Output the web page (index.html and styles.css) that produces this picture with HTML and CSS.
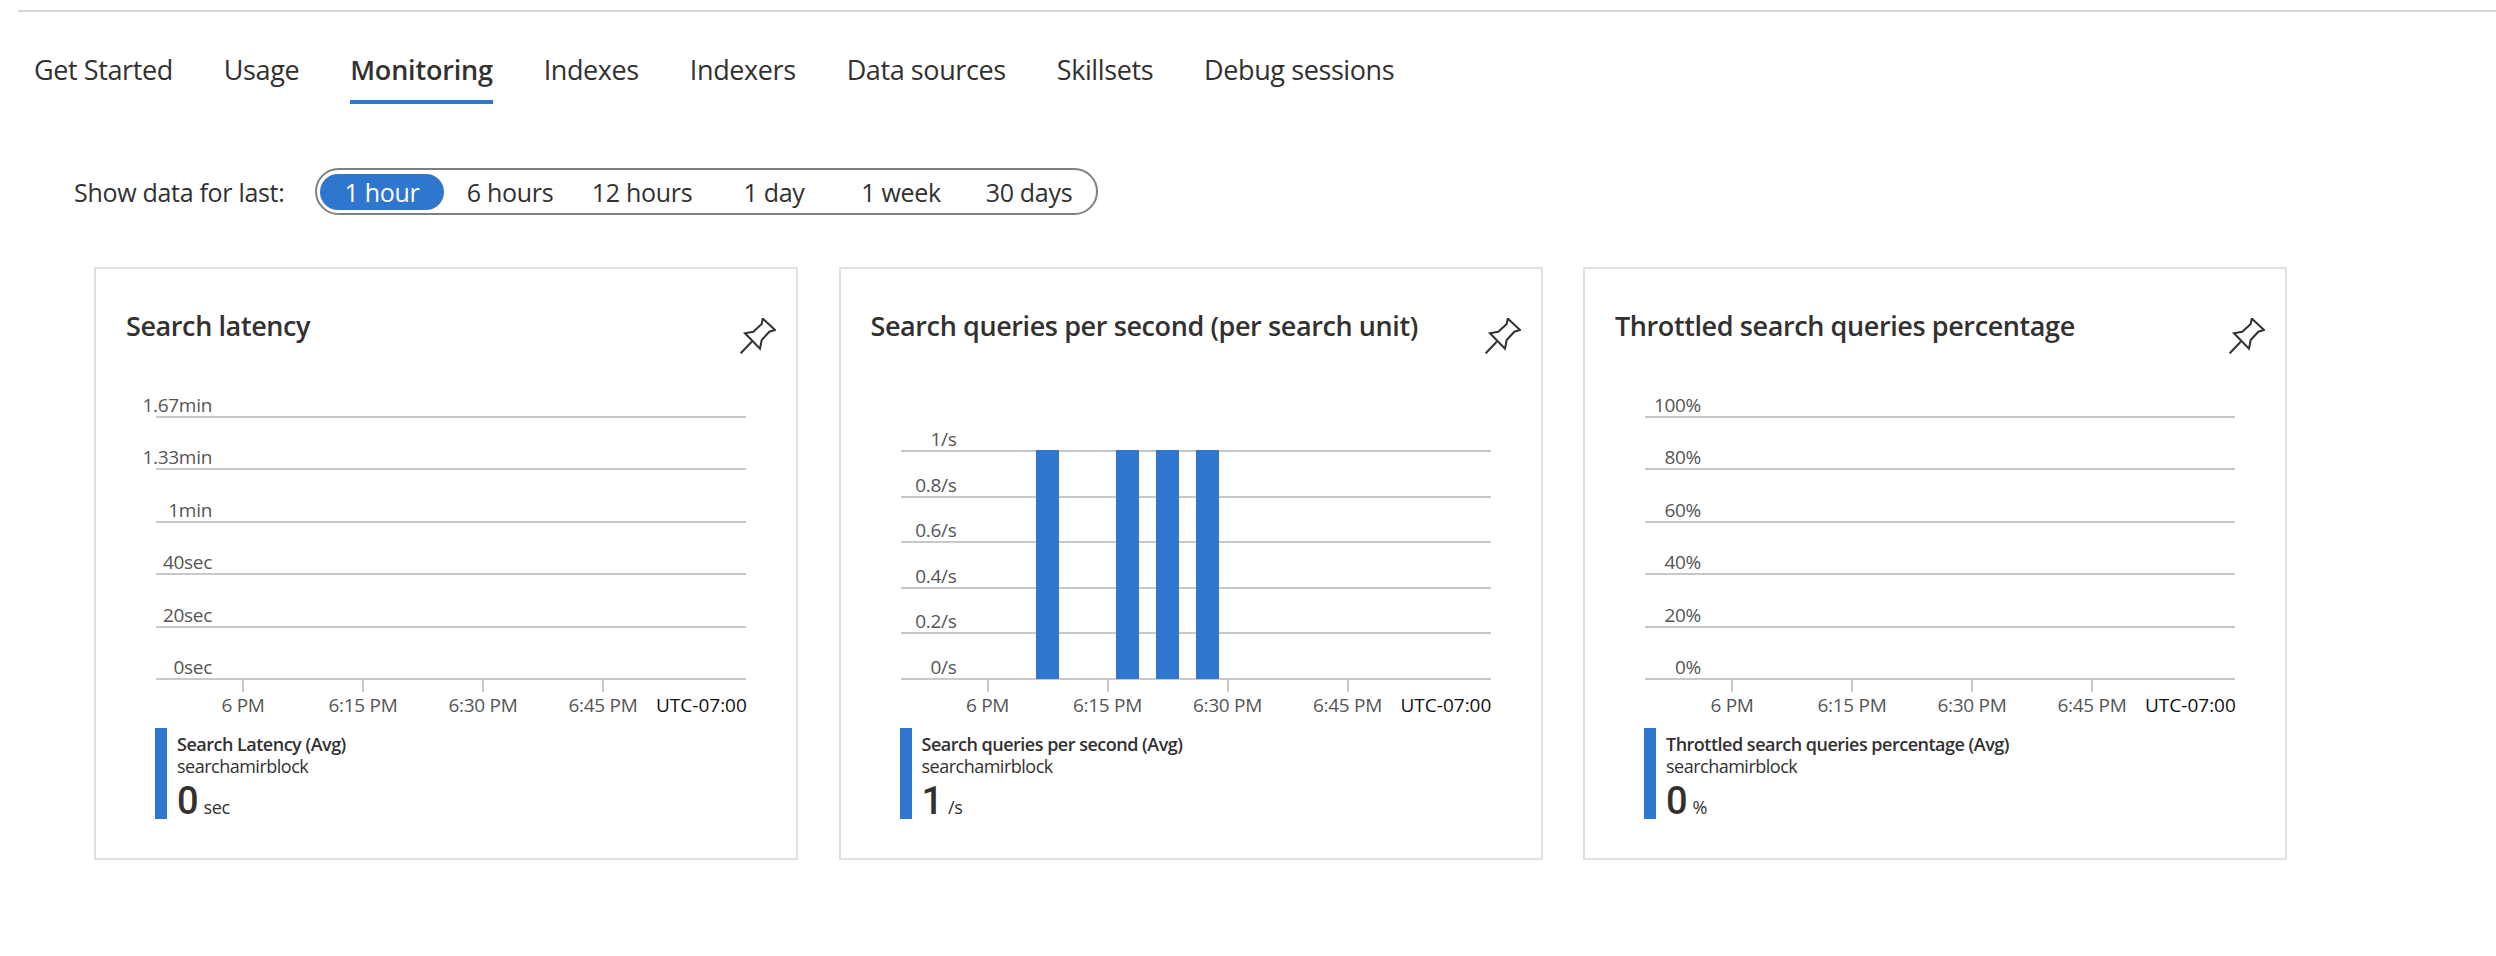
FILE: index.html
```html
<!DOCTYPE html>
<html lang="en">
<head>
  <meta charset="UTF-8">
  <title>Monitoring</title>
  <link rel="stylesheet" href="styles.css">
</head>
<body>
  <div class="topline"></div>

  <!-- Tabs -->
  <nav class="tabs">
    <a class="tab">Get Started</a>
    <a class="tab">Usage</a>
    <a class="tab active">Monitoring</a>
    <a class="tab">Indexes</a>
    <a class="tab">Indexers</a>
    <a class="tab">Data sources</a>
    <a class="tab">Skillsets</a>
    <a class="tab">Debug sessions</a>
  </nav>

  <!-- Time range -->
  <div class="range">
    <span class="range-label">Show data for last:</span>
    <div class="pill">
      <span class="option selected">1 hour</span>
      <span class="option">6 hours</span>
      <span class="option">12 hours</span>
      <span class="option">1 day</span>
      <span class="option">1 week</span>
      <span class="option">30 days</span>
    </div>
  </div>

  <div class="cards">

    <!-- Search latency -->
    <section class="card">
      <header class="card-head">
        <h2>Search latency</h2>
        <svg class="pin" viewBox="0 0 36 36"><path d="M5 15.3 13.3 13.7 21.7 6 22.7.5 35 12 29.3 13.7 21.7 22 20 30.7ZM.7 35.3 11.7 23.7"/></svg>
      </header>
      <div class="chart">
        <div class="plot wide">
          <div class="row"><span>1.67min</span></div>
          <div class="row"><span>1.33min</span></div>
          <div class="row"><span>1min</span></div>
          <div class="row"><span>40sec</span></div>
          <div class="row"><span>20sec</span></div>
          <div class="row"><span>0sec</span></div>
        </div>
        <div class="axis">
          <span class="tick">6 PM</span>
          <span class="tick">6:15 PM</span>
          <span class="tick">6:30 PM</span>
          <span class="tick">6:45 PM</span>
          <span class="zone">UTC-07:00</span>
        </div>
      </div>
      <div class="legend">
        <div class="legend-name">Search Latency (Avg)</div>
        <div class="legend-res">searchamirblock</div>
        <div class="legend-val"><b>0</b><span>sec</span></div>
      </div>
    </section>

    <!-- Search queries per second -->
    <section class="card">
      <header class="card-head">
        <h2>Search queries per second (per search unit)</h2>
        <svg class="pin" viewBox="0 0 36 36"><path d="M5 15.3 13.3 13.7 21.7 6 22.7.5 35 12 29.3 13.7 21.7 22 20 30.7ZM.7 35.3 11.7 23.7"/></svg>
      </header>
      <div class="chart">
        <div class="plot narrow">
          <div class="row"><span>1/s</span></div>
          <div class="row"><span>0.8/s</span></div>
          <div class="row"><span>0.6/s</span></div>
          <div class="row"><span>0.4/s</span></div>
          <div class="row"><span>0.2/s</span></div>
          <div class="row"><span>0/s</span></div>
          <div class="bar" style="left: 135px"></div>
          <div class="bar" style="left: 215px"></div>
          <div class="bar" style="left: 255px"></div>
          <div class="bar" style="left: 295px"></div>
        </div>
        <div class="axis">
          <span class="tick">6 PM</span>
          <span class="tick">6:15 PM</span>
          <span class="tick">6:30 PM</span>
          <span class="tick">6:45 PM</span>
          <span class="zone">UTC-07:00</span>
        </div>
      </div>
      <div class="legend">
        <div class="legend-name">Search queries per second (Avg)</div>
        <div class="legend-res">searchamirblock</div>
        <div class="legend-val"><b>1</b><span>/s</span></div>
      </div>
    </section>

    <!-- Throttled -->
    <section class="card">
      <header class="card-head">
        <h2>Throttled search queries percentage</h2>
        <svg class="pin" viewBox="0 0 36 36"><path d="M5 15.3 13.3 13.7 21.7 6 22.7.5 35 12 29.3 13.7 21.7 22 20 30.7ZM.7 35.3 11.7 23.7"/></svg>
      </header>
      <div class="chart">
        <div class="plot wide">
          <div class="row"><span>100%</span></div>
          <div class="row"><span>80%</span></div>
          <div class="row"><span>60%</span></div>
          <div class="row"><span>40%</span></div>
          <div class="row"><span>20%</span></div>
          <div class="row"><span>0%</span></div>
        </div>
        <div class="axis">
          <span class="tick">6 PM</span>
          <span class="tick">6:15 PM</span>
          <span class="tick">6:30 PM</span>
          <span class="tick">6:45 PM</span>
          <span class="zone">UTC-07:00</span>
        </div>
      </div>
      <div class="legend">
        <div class="legend-name">Throttled search queries percentage (Avg)</div>
        <div class="legend-res">searchamirblock</div>
        <div class="legend-val"><b>0</b><span>%</span></div>
      </div>
    </section>

  </div>
</body>
</html>
```

FILE: styles.css
```css
body {
  margin: 0;
  background: white;
  color: #323130;
  font-family: "Open Sans", sans-serif;
}

.topline {
  height: 2px;
  margin: 10px 0 0 18px;
  background: #d8d8d8;
}

.tabs {
  display: flex;
  gap: 51px;
  margin: 38px 0 0 34px;
}

.tab {
  padding-bottom: 10px;
  border-bottom: 4px solid transparent;
  font-size: 27px;
  line-height: 40px;
  letter-spacing: -0.4px;
}

.tab.active {
  border-bottom-color: #2f77ce;
  font-weight: 600;
  letter-spacing: -0.2px;
}

.range {
  display: flex;
  align-items: center;
  margin: 64px 0 0 74px;
}

.range-label {
  width: 241px;
  font-size: 25px;
  letter-spacing: -0.3px;
}

.pill {
  display: grid;
  grid-template-columns: 124px 132px 132px 132px 122px 134px;
  align-items: center;
  height: 47px;
  box-sizing: border-box;
  padding-left: 3px;
  border: 2px solid #808080;
  border-radius: 24px;
  font-size: 25px;
  letter-spacing: -0.3px;
}

.option {
  text-align: center;
  line-height: 36px;
}

.option.selected {
  background: #2f77ce;
  color: white;
  border-radius: 18px;
}

.cards {
  display: grid;
  grid-template-columns: repeat(3, 704px);
  gap: 40.5px;
  margin: 52px 0 0 94px;
}

.card {
  display: flex;
  flex-direction: column;
  box-sizing: border-box;
  height: 593px;
  padding: 0 50px 0 60px;
  border: 2px solid #e0e0e0;
}

.card-head {
  display: flex;
  justify-content: space-between;
  height: 94px;
  margin: 0 -30px 0 -30px;
  padding-top: 37px;
  box-sizing: border-box;
}

.card-head h2 {
  margin: 0;
  font-size: 27px;
  font-weight: 600;
  line-height: 40px;
  letter-spacing: -0.4px;
}

.pin {
  width: 36px;
  height: 36px;
  margin-top: 12px;
  fill: none;
  stroke: #333;
  stroke-width: 2;
}

.chart {
  display: flex;
  flex-direction: column;
  justify-content: flex-end;
  height: 355px;
}

.plot {
  position: relative;
}

.row {
  display: flex;
  align-items: flex-end;
  justify-content: flex-end;
  box-sizing: border-box;
  width: 100%;
  border-bottom: 2px solid #c8c8c8;
  font-size: 19px;
  line-height: 26px;
  color: #555;
  letter-spacing: -0.3px;
}

/* label hangs off the start of the line */
.row span {
  margin-right: 534px;
  margin-bottom: -2px;
  white-space: nowrap;
}

.wide .row { height: 52.4px; }
.narrow .row { height: 45.6px; }

.bar {
  position: absolute;
  bottom: 1px;
  top: 44px;
  width: 23px;
  background: #2f77ce;
}

.axis {
  display: flex;
  padding-left: 27px;
}

.tick {
  flex: none;
  width: 120px;
  padding-top: 12px;
  text-align: center;
  font-size: 19px;
  line-height: 26px;
  color: #555;
  letter-spacing: -0.3px;
  position: relative;
}

.tick::before {
  content: "";
  position: absolute;
  top: 0;
  left: 59px;
  width: 2px;
  height: 12px;
  background: #c8c8c8;
}

.zone {
  flex: none;
  margin-left: -7px;
  padding-top: 12px;
  font-size: 19px;
  line-height: 26px;
  color: #111;
  white-space: nowrap;
}

.legend {
  height: 91px;
  margin-top: 10px;
  margin-left: -1px;
  padding-left: 10px;
  padding-top: 5px;
  border-left: 12px solid #2f77ce;
  box-sizing: border-box;
}

.legend-name {
  font-size: 18px;
  font-weight: 600;
  line-height: 22px;
  letter-spacing: -0.5px;
}

.legend-res {
  font-size: 18px;
  line-height: 22px;
  letter-spacing: -0.5px;
}

.legend-val {
  display: flex;
  align-items: baseline;
  height: 36px;
  margin-top: 6px;
}

.legend-val b {
  font-family: Roboto, sans-serif;
  font-size: 38px;
  font-weight: 500;
  line-height: 36px;
}

.legend-val span {
  margin-left: 5px;
  font-size: 18px;
  line-height: 22px;
  letter-spacing: -0.4px;
}
```
